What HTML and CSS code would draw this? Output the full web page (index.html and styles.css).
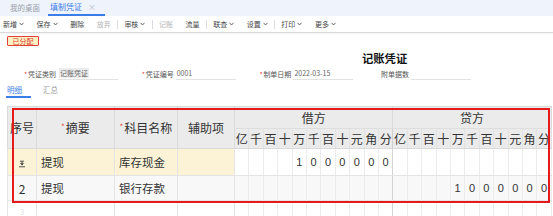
FILE: index.html
```html
<!DOCTYPE html>
<html lang="zh-CN">
<head>
<meta charset="utf-8">
<title>填制凭证</title>
<link rel="stylesheet" href="styles.css">
</head>
<body>
<div class="tabbar">
  <div class="tab">我的桌面</div>
  <div class="tab tab-active">填制凭证<span class="tab-close">×</span></div>
</div>
<div class="toolbar">
  <span class="tb">新增<svg class="caret" viewBox="0 0 5 4"><polyline points="0.5,0.8 2.5,3 4.5,0.8"/></svg></span>
  <span class="tb">保存<svg class="caret" viewBox="0 0 5 4"><polyline points="0.5,0.8 2.5,3 4.5,0.8"/></svg></span>
  <span class="tb">删除</span>
  <span class="tb tb-off">放弃</span>
  <span class="sep"></span>
  <span class="tb">审核<svg class="caret" viewBox="0 0 5 4"><polyline points="0.5,0.8 2.5,3 4.5,0.8"/></svg></span>
  <span class="sep"></span>
  <span class="tb tb-off">记账</span>
  <span class="tb">流量</span>
  <span class="sep"></span>
  <span class="tb">联查<svg class="caret" viewBox="0 0 5 4"><polyline points="0.5,0.8 2.5,3 4.5,0.8"/></svg></span>
  <span class="tb">设置<svg class="caret" viewBox="0 0 5 4"><polyline points="0.5,0.8 2.5,3 4.5,0.8"/></svg></span>
  <span class="sep"></span>
  <span class="tb">打印<svg class="caret" viewBox="0 0 5 4"><polyline points="0.5,0.8 2.5,3 4.5,0.8"/></svg></span>
  <span class="tb">更多<svg class="caret" viewBox="0 0 5 4"><polyline points="0.5,0.8 2.5,3 4.5,0.8"/></svg></span>
</div>
<div class="meta">
  <div class="badge">已分配</div>
  <div class="title">记账凭证</div>
  <div class="fields">
    <div class="field"><span class="star">*</span><span class="label">凭证类别</span><span class="value"><span class="sel">记账凭证</span></span></div>
    <div class="field"><span class="star">*</span><span class="label">凭证编号</span><span class="value">0001</span></div>
    <div class="field"><span class="star">*</span><span class="label">制单日期</span><span class="value">2022-03-15</span></div>
    <div class="field"><span class="star star-hidden">*</span><span class="label">附单据数</span><span class="value"></span></div>
  </div>
  <div class="subtabs">
    <span class="subtab subtab-active">明细</span>
    <span class="subtab">汇总</span>
  </div>
</div>
<div class="grid-wrap">
  <table class="voucher">
    <colgroup>
      <col class="c-no"><col class="c-sum"><col class="c-acc"><col class="c-aux">
      <col class="c-d"><col class="c-d"><col class="c-d"><col class="c-d"><col class="c-d"><col class="c-d"><col class="c-d"><col class="c-d"><col class="c-d"><col class="c-d"><col class="c-d">
      <col class="c-d"><col class="c-d"><col class="c-d"><col class="c-d"><col class="c-d"><col class="c-d"><col class="c-d"><col class="c-d"><col class="c-d"><col class="c-d"><col class="c-d">
    </colgroup>
    <thead>
      <tr class="h1">
        <th rowspan="2">序号</th>
        <th rowspan="2"><span class="req">*</span>摘要</th>
        <th rowspan="2"><span class="req">*</span>科目名称</th>
        <th rowspan="2">辅助项</th>
        <th colspan="11" class="side">借方</th>
        <th colspan="11" class="side">贷方</th>
      </tr>
      <tr class="h2">
        <th>亿</th><th>千</th><th>百</th><th>十</th><th>万</th><th>千</th><th>百</th><th>十</th><th>元</th><th>角</th><th class="end">分</th>
        <th>亿</th><th>千</th><th>百</th><th>十</th><th>万</th><th>千</th><th>百</th><th>十</th><th>元</th><th>角</th><th>分</th>
      </tr>
    </thead>
    <tbody>
      <tr class="r1">
        <td class="no"><svg class="ins" viewBox="0 0 8 8"><path d="M2 1.2h4M4 1.2v2M2.6 3.4h2.8l-1.4 1.8z M1 6.8h6"/></svg></td>
        <td class="txt">提现</td>
        <td class="txt">库存现金</td>
        <td class="txt"></td>
        <td class="d"></td><td class="d"></td><td class="d"></td><td class="d"></td><td class="d">1</td><td class="d">0</td><td class="d">0</td><td class="d">0</td><td class="d">0</td><td class="d">0</td><td class="d end">0</td>
        <td class="d"></td><td class="d"></td><td class="d"></td><td class="d"></td><td class="d"></td><td class="d"></td><td class="d"></td><td class="d"></td><td class="d"></td><td class="d"></td><td class="d"></td>
      </tr>
      <tr class="r2">
        <td class="no">2</td>
        <td class="txt">提现</td>
        <td class="txt">银行存款</td>
        <td class="txt"></td>
        <td class="d"></td><td class="d"></td><td class="d"></td><td class="d"></td><td class="d"></td><td class="d"></td><td class="d"></td><td class="d"></td><td class="d"></td><td class="d"></td><td class="d end"></td>
        <td class="d"></td><td class="d"></td><td class="d"></td><td class="d"></td><td class="d">1</td><td class="d">0</td><td class="d">0</td><td class="d">0</td><td class="d">0</td><td class="d">0</td><td class="d">0</td>
      </tr>
      <tr class="r3">
        <td class="no faint">3</td>
        <td class="txt"></td>
        <td class="txt"></td>
        <td class="txt"></td>
        <td class="d"></td><td class="d"></td><td class="d"></td><td class="d"></td><td class="d"></td><td class="d"></td><td class="d"></td><td class="d"></td><td class="d"></td><td class="d"></td><td class="d end"></td>
        <td class="d"></td><td class="d"></td><td class="d"></td><td class="d"></td><td class="d"></td><td class="d"></td><td class="d"></td><td class="d"></td><td class="d"></td><td class="d"></td><td class="d"></td>
      </tr>
    </tbody>
  </table>
  <div class="mark"></div>
</div>
</body>
</html>
```
FILE: styles.css
```css
* { box-sizing: border-box; }
html, body { margin: 0; padding: 0; background: #fff; }
body {
  width: 553px;
  height: 216px;
  overflow: hidden;
  font-family: "Noto Sans CJK SC", "Noto Sans", sans-serif;
  color: #333;
}

.tabbar {
  height: 16px;
  background: #eef3fc;
  display: flex;
  align-items: stretch;
  padding-left: 10px;
}
.tab {
  font-size: 7.5px;
  line-height: 16px;
  color: #9aa0a8;
  display: flex;
  align-items: center;
}
.tab-active {
  margin-left: 8px;
  padding: 0 9px 0 2px;
  color: #3b7de8;
  font-size: 8px;
  border-bottom: 2px solid #3b7de8;
  line-height: 14px;
}
.tab-close {
  margin-left: 6px;
  color: #b8bcc4;
  font-size: 8px;
}

.toolbar {
  height: 17px;
  border-bottom: 1px solid #d9d9d9;
  box-shadow: 0 1px 2px rgba(0, 0, 0, 0.06);
  display: flex;
  align-items: center;
  gap: 12.6px;
  padding-left: 3px;
  font-size: 7px;
  color: #444;
}
.tb { display: flex; align-items: center; white-space: nowrap; }
.tb-off { color: #b4b4b4; }
.caret {
  width: 5px;
  height: 4px;
  margin-left: 2px;
  fill: none;
  stroke: #555;
  stroke-width: 0.9;
}
.sep {
  width: 1px;
  height: 9px;
  background: #dcdcdc;
  margin: 0 -6.3px;
}

.meta {
  height: 69px;
  display: flex;
  flex-direction: column;
}
.badge {
  margin: 3px 0 0 7px;
  width: 32px;
  height: 10px;
  border: 1px solid #e2403a;
  border-radius: 1px;
  background: #fdf0c4;
  color: #e0402f;
  font-size: 7px;
  line-height: 8px;
  text-align: center;
}
.title {
  margin-top: 5px;
  padding-left: 362px;
  height: 14px;
  font-size: 11.3px;
  line-height: 14px;
  font-weight: 700;
  color: #111;
  white-space: nowrap;
}
.fields {
  margin-top: 3px;
  display: flex;
  gap: 22.7px;
  padding-left: 23px;
  font-size: 7px;
  color: #555;
}
.field {
  width: 95px;
  display: flex;
  align-items: flex-end;
  height: 12px;
}
.star {
  width: 5px;
  color: #e8463a;
  line-height: 11px;
  padding-left: 1px;
}
.star-hidden { visibility: hidden; }
.label { width: 30px; line-height: 11px; white-space: nowrap; }
.value {
  flex: 1;
  height: 12px;
  border-bottom: 1px solid #e2e2e2;
  line-height: 11px;
  padding-left: 1px;
  color: #666;
  white-space: nowrap;
}
.sel { background: #ececec; padding: 0 1px; }

.subtabs {
  margin-top: 3px;
  display: flex;
  padding-left: 6px;
}
.subtab {
  font-size: 7.5px;
  line-height: 13px;
  color: #9a9a9a;
  border-bottom: 2px solid transparent;
  width: 25px;
  padding-left: 1px;
  margin-right: 11px;
}
.subtab-active {
  color: #3b7de8;
  border-bottom-color: #3b7de8;
}

.grid-wrap {
  position: relative;
  margin-top: 4px;
  padding-left: 7px;
}
.voucher {
  table-layout: fixed;
  border-collapse: collapse;
  width: 544px;
}
.c-no { width: 29px; }
.c-sum { width: 78px; }
.c-acc { width: 63px; }
.c-aux { width: 57px; }
.c-d { width: 14.4px; }

.voucher th {
  background: #ebebeb;
  font-weight: 400;
  color: #333;
  font-size: 12px;
  padding: 0;
  border: 1px solid #dadada;
  white-space: nowrap;
  overflow: hidden;
}
.h1 th { height: 22px; }
.h2 th { height: 20px; border-left-color: #e2e2e2; border-right-color: #e2e2e2; line-height: 14px; }
.h1 th.side { border-bottom-color: #dedede; }
.voucher .h2 th.end { border-right-color: #cfcfcf; }
.req {
  color: #e8463a;
  font-size: 8px;
  vertical-align: 3px;
  margin-right: 1px;
}

.voucher td {
  padding: 0;
  border: 1px solid #e4e4e4;
  font-size: 11.5px;
  white-space: nowrap;
  overflow: hidden;
}
.r1 td { height: 27px; }
.r2 td { height: 25px; background: #f8f8f8; }
.r3 td { height: 24px; vertical-align: top; }
.r1 .no, .r1 .txt { background: #fcf3d6; }
.voucher td.txt { padding-left: 4px; }
.voucher td.no { text-align: center; font-size: 12px; }
.voucher .r3 td.no { font-size: 8px; line-height: 10px; padding-top: 6px; }
.voucher td.d {
  text-align: center;
  font-family: "Liberation Sans", Arial, sans-serif;
  font-size: 11px;
  border-color: #ececec;
  border-top-color: #e4e4e4;
  border-bottom-color: #e4e4e4;
}
.voucher td.end { border-right-color: #d4d4d4; }
.faint { color: #e2e2e2; }
.ins {
  width: 8px;
  height: 8px;
  fill: none;
  stroke: #444;
  stroke-width: 0.9;
  vertical-align: middle;
}

.mark {
  position: absolute;
  left: 12px;
  top: 2px;
  width: 538px;
  height: 95px;
  border: 2px solid #e51b1b;
  pointer-events: none;
}
```
